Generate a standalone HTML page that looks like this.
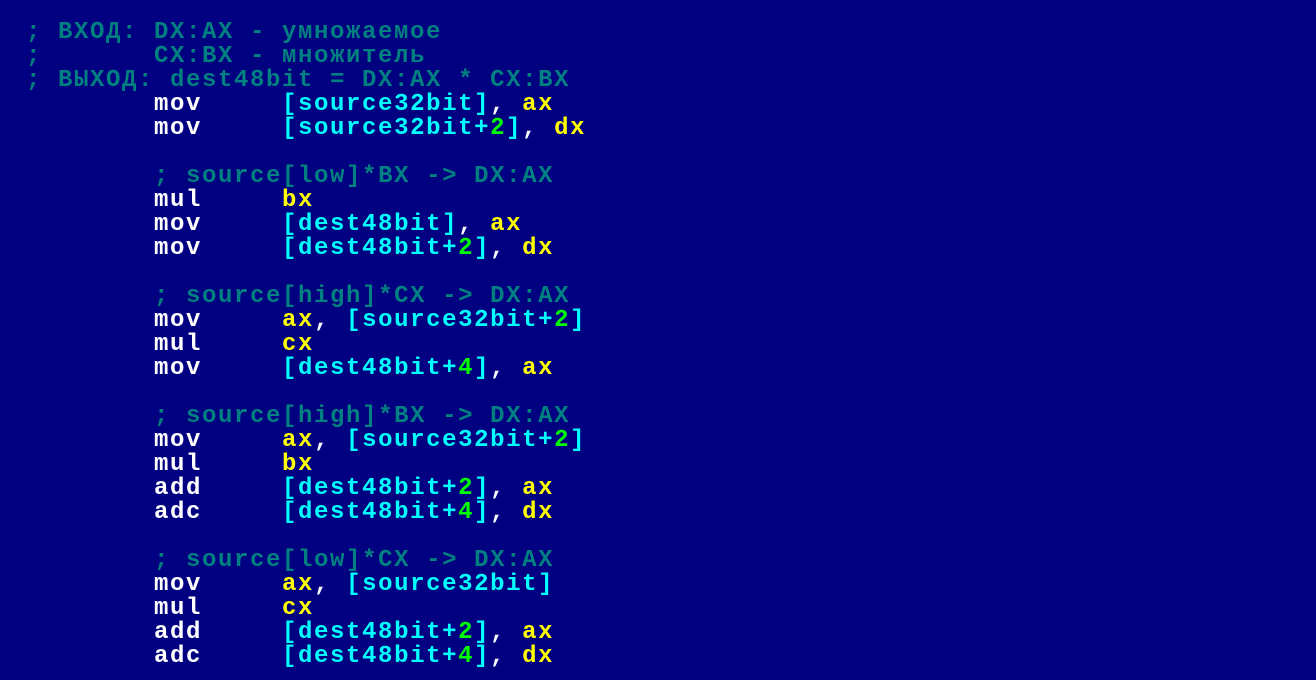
<!DOCTYPE html>
<html><head><meta charset="utf-8"><style>
html,body{margin:0;padding:0;background:#000080;width:1316px;height:680px;overflow:hidden}
pre{margin:0;position:absolute;left:26px;top:21px;font-family:"Liberation Mono","DejaVu Sans Mono",monospace;font-weight:bold;font-size:24px;letter-spacing:1.6px;line-height:24px;color:#fff}
.c{color:#008080}.y{color:#ffff00}.b{color:#00ffff}.g{color:#00ff00}
</style></head><body>
<pre><span class="c">; ВХОД: DX:AX - умножаемое</span>
<span class="c">;       CX:BX - множитель</span>
<span class="c">; ВЫХОД: dest48bit = DX:AX * CX:BX</span>
        mov     <span class="b">[source32bit]</span>, <span class="y">ax</span>
        mov     <span class="b">[source32bit+</span><span class="g">2</span><span class="b">]</span>, <span class="y">dx</span>

        <span class="c">; source[low]*BX -&gt; DX:AX</span>
        mul     <span class="y">bx</span>
        mov     <span class="b">[dest48bit]</span>, <span class="y">ax</span>
        mov     <span class="b">[dest48bit+</span><span class="g">2</span><span class="b">]</span>, <span class="y">dx</span>

        <span class="c">; source[high]*CX -&gt; DX:AX</span>
        mov     <span class="y">ax</span>, <span class="b">[source32bit+</span><span class="g">2</span><span class="b">]</span>
        mul     <span class="y">cx</span>
        mov     <span class="b">[dest48bit+</span><span class="g">4</span><span class="b">]</span>, <span class="y">ax</span>

        <span class="c">; source[high]*BX -&gt; DX:AX</span>
        mov     <span class="y">ax</span>, <span class="b">[source32bit+</span><span class="g">2</span><span class="b">]</span>
        mul     <span class="y">bx</span>
        add     <span class="b">[dest48bit+</span><span class="g">2</span><span class="b">]</span>, <span class="y">ax</span>
        adc     <span class="b">[dest48bit+</span><span class="g">4</span><span class="b">]</span>, <span class="y">dx</span>

        <span class="c">; source[low]*CX -&gt; DX:AX</span>
        mov     <span class="y">ax</span>, <span class="b">[source32bit]</span>
        mul     <span class="y">cx</span>
        add     <span class="b">[dest48bit+</span><span class="g">2</span><span class="b">]</span>, <span class="y">ax</span>
        adc     <span class="b">[dest48bit+</span><span class="g">4</span><span class="b">]</span>, <span class="y">dx</span></pre>
</body></html>
